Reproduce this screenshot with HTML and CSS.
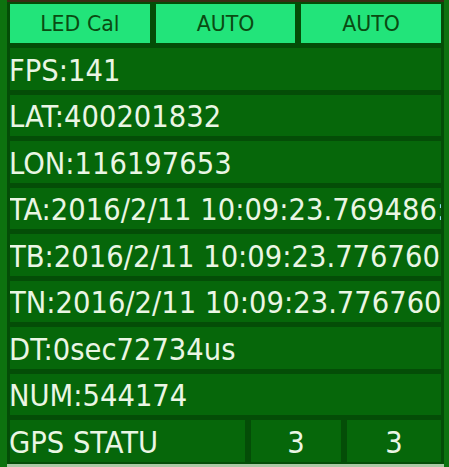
FILE: index.html
```html
<!DOCTYPE html>
<html>
<head>
<meta charset="utf-8">
<link rel="stylesheet" href="styles.css">
</head>
<body>
<div class="panel">
  <div class="btn-row">
    <div class="btn">LED Cal</div>
    <div class="btn">AUTO</div>
    <div class="btn">AUTO</div>
  </div>
  <div class="row">FPS:141</div>
  <div class="row">LAT:400201832</div>
  <div class="row">LON:116197653</div>
  <div class="row clip">TA:2016/2/11 10:09:23.769486:</div>
  <div class="row clip">TB:2016/2/11 10:09:23.776760:</div>
  <div class="row clip">TN:2016/2/11 10:09:23.776760:</div>
  <div class="row">DT:0sec72734us</div>
  <div class="row">NUM:544174</div>
  <div class="status-row">
    <div class="cell">GPS STATU</div>
    <div class="cell num">3</div>
    <div class="cell num">3</div>
  </div>
</div>
</body>
</html>
```
FILE: styles.css
```css
html, body {
  margin: 0;
  padding: 0;
}
body {
  background: #0d720f;
  width: 449px;
  height: 467px;
  overflow: hidden;
  font-family: "DejaVu Sans Condensed", "DejaVu Sans", sans-serif;
}
.panel {
  margin-left: 7px;
  width: 437px;
  height: 467px;
  box-sizing: border-box;
  background: #044d07;
  border-top: 2px solid #3a2c14;
  border-bottom: 3px solid #a9c9a4;
  padding: 2px 3px 0 3px;
  display: grid;
  grid-template-rows: 39px repeat(9, 41.5px);
  row-gap: 5px;
}
.btn-row {
  display: grid;
  grid-template-columns: 1fr 1fr 1fr;
  column-gap: 6px;
}
.btn {
  background: #22e47a;
  color: #0a4b12;
  font-family: "DejaVu Sans", sans-serif;
  font-size: 20.5px;
  display: flex;
  align-items: center;
  justify-content: center;
  padding-top: 1px;
}
.row {
  background: #06670a;
  color: #eaf6e4;
  font-size: 30.5px;
  line-height: 34px;
  white-space: nowrap;
  display: flex;
  align-items: center;
  padding-top: 4px;
  box-sizing: border-box;
  text-indent: -1px;
}
.row.clip {
  overflow: hidden;
}
.status-row {
  display: grid;
  grid-template-columns: 235px 90px 1fr;
  column-gap: 6px;
}
.cell {
  background: #06670a;
  color: #eaf6e4;
  font-size: 30.5px;
  line-height: 34px;
  white-space: nowrap;
  display: flex;
  align-items: center;
  padding-top: 4px;
  box-sizing: border-box;
  text-indent: -1px;
}
.cell.num {
  justify-content: center;
  text-indent: 0;
}
```
